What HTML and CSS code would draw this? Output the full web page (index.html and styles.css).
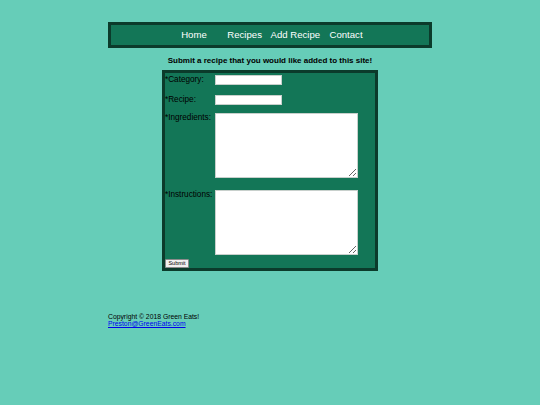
FILE: index.html
```html
<!DOCTYPE html>
<html lang="en">
<head>
<meta charset="utf-8">
<title>Green Eats - Add Recipe</title>
<link rel="stylesheet" href="styles.css">
</head>
<body>
<nav class="nav">
  <a class="nav-item" href="#">Home</a><a class="nav-item" href="#">Recipes</a><a class="nav-item" href="#">Add Recipe</a><a class="nav-item" href="#">Contact</a>
</nav>
<h1 class="intro">Submit a recipe that you would like added to this site!</h1>
<form class="recipe-form">
  <div class="row row-cat">
    <label class="label">*Category:</label>
    <input class="field-text" type="text">
  </div>
  <div class="row row-recipe">
    <label class="label">*Recipe:</label>
    <input class="field-text" type="text">
  </div>
  <div class="row row-ingr">
    <label class="label">*Ingredients:</label>
    <textarea class="field-area"></textarea>
  </div>
  <div class="row row-instr">
    <label class="label">*Instructions:</label>
    <textarea class="field-area"></textarea>
  </div>
  <button class="submit" type="button">Submit</button>
</form>
<footer class="footer">
  <div>Copyright &copy; 2018 Green Eats!</div>
  <a class="mail" href="#">Preston@GreenEats.com</a>
</footer>
</body>
</html>
```

FILE: styles.css
```css
html, body {
  margin: 0;
  padding: 0;
}
body {
  background: #66cdb8;
  font-family: "Liberation Sans", Arial, sans-serif;
  color: #000;
  padding-top: 22px;
}
.nav {
  width: 318px;
  height: 20px;
  margin: 0 auto;
  background: #137657;
  border: 3px solid #0b3b2b;
  text-align: center;
  font-size: 9.6px;
  line-height: 20px;
}
.nav-item {
  display: inline-block;
  width: 50.7px;
  color: #fff;
  text-decoration: none;
}
.intro {
  font-size: 8px;
  font-weight: bold;
  text-align: center;
  margin: 8px 0 4.5px;
  line-height: 9px;
}
.recipe-form {
  width: 210px;
  margin: 0 auto;
  background: #137657;
  border: 3px solid #0b3b2b;
  padding: 2px 0 0 0;
}
.row {
  display: flex;
  align-items: flex-start;
}
.label {
  width: 50px;
  font-size: 8.2px;
  line-height: 9px;
  flex: none;
}
.field-text {
  box-sizing: border-box;
  width: 67px;
  height: 10px;
  margin: 0;
  padding: 0;
  border: 1px solid #c8d0cc;
  background: #fff;
}
.field-area {
  box-sizing: border-box;
  width: 143px;
  height: 65px;
  margin: 0;
  padding: 1px;
  border: 1px solid #c8d0cc;
  background: #fff;
  font-size: 8px;
}
.row-cat { margin-bottom: 10px; }
.row-recipe { margin-bottom: 8px; }
.row-ingr { margin-bottom: 12px; }
.row-instr { margin-bottom: 4px; }
.submit {
  display: block;
  box-sizing: border-box;
  width: 24px;
  height: 9px;
  margin: 0;
  padding: 0;
  font-family: "Liberation Sans", Arial, sans-serif;
  font-size: 5.5px;
  line-height: 7px;
  background: #f0f0f0;
  border: 1px solid #8a8a8a;
  border-radius: 1px;
  color: #000;
}
.footer {
  margin: 42px 0 0 108px;
  font-size: 6.8px;
  line-height: 7.7px;
}
.mail {
  color: #0000ee;
}
```
